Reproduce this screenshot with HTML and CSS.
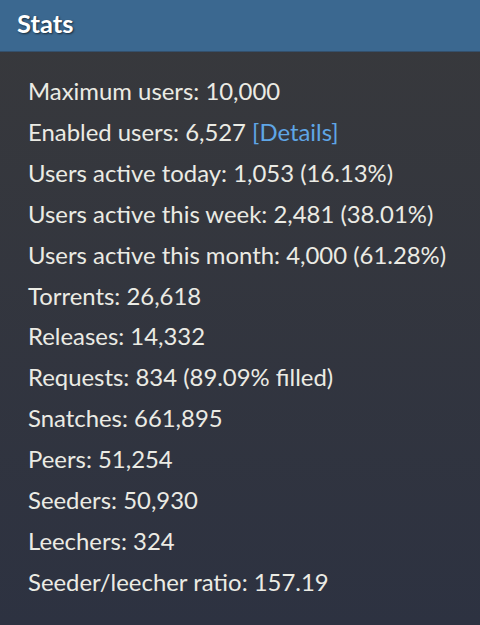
FILE: index.html
```html
<!DOCTYPE html>
<html>
<head>
<meta charset="utf-8">
<link rel="stylesheet" href="styles.css">
</head>
<body>
<div class="box">
  <div class="head">Stats</div>
  <ul class="stats">
    <li>Maximum users: 10,000</li>
    <li>Enabled users: 6,527 <a href="#">[Details]</a></li>
    <li>Users active today: 1,053 (16.13%)</li>
    <li>Users active this week: 2,481 (38.01%)</li>
    <li>Users active this month: 4,000 (61.28%)</li>
    <li>Torrents: 26,618</li>
    <li>Releases: 14,332</li>
    <li>Requests: 834 (89.09% filled)</li>
    <li>Snatches: 661,895</li>
    <li>Peers: 51,254</li>
    <li>Seeders: 50,930</li>
    <li>Leechers: 324</li>
    <li>Seeder/leecher ratio: 157.19</li>
  </ul>
</div>
</body>
</html>
```
FILE: styles.css
```css
html, body {
  margin: 0;
  padding: 0;
  height: 100%;
}
body {
  font-family: Lato, "Open Sans", sans-serif;
  background: #2f3340;
}
.box {
  height: 625px;
  background: linear-gradient(to bottom, #38393c 0%, #2d3241 100%);
  display: flex;
  flex-direction: column;
}
.head {
  height: 52px;
  box-sizing: border-box;
  background: #3b6890;
  border-bottom: 1px solid #34506c;
  color: #ffffff;
  font-weight: bold;
  font-size: 25.5px;
  line-height: 30px;
  padding: 8px 0 0 17px;
  text-shadow: 1px 1px 2px rgba(0,0,0,0.6);
}
.stats {
  list-style: none;
  margin: 0;
  padding: 19px 0 0 28px;
  display: flex;
  flex-direction: column;
}
.stats li {
  color: #ebebe4;
  font-size: 23.9px;
  line-height: 40.9px;
}
.stats a {
  color: #5fa6e6;
  text-decoration: none;
}
```
